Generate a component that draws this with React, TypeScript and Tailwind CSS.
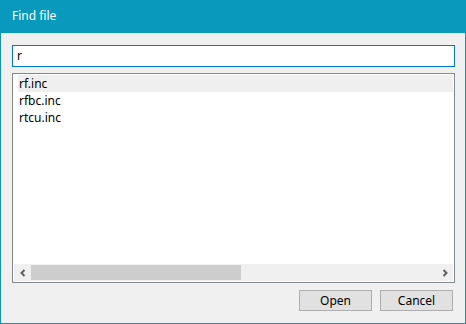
import React from "react";

const font = { fontFamily: '"Segoe UI", "Noto Sans", "Open Sans", sans-serif' };

function Chevron({ dir }: { dir: "left" | "right" }) {
  return (
    <svg width="8" height="8" viewBox="0 0 8 8">
      {dir === "left" ? (
        <polyline points="5.5,1 2.5,4 5.5,7" fill="none" stroke="#606060" strokeWidth="2" />
      ) : (
        <polyline points="2.5,1 5.5,4 2.5,7" fill="none" stroke="#606060" strokeWidth="2" />
      )}
    </svg>
  );
}

export default function App() {
  const files = ["rf.inc", "rfbc.inc", "rtcu.inc"];
  return (
    <div
      className="w-[466px] h-[324px] flex flex-col bg-[#f0f0f0] border-x border-b border-[#0899bc] text-[12px] text-black"
      style={font}
    >
      <div className="h-[33px] bg-[#0899bc] text-white flex items-center pl-[11px] pb-[1px] shrink-0 -mx-px">
        <span className="pl-px">Find file</span>
      </div>
      <div className="flex flex-col pl-[11px] pr-[10px] pt-[12px]">
        <div className="h-[22px] border border-[#0078d7] bg-white flex items-center pl-[4px] leading-none">
          r
        </div>
        <div className="mt-[6px] h-[210px] border border-[#828790] bg-white p-px flex flex-col">
          <div className="flex-1 flex flex-col pl-[4px]">
            {files.map((f, i) => (
              <div
                key={f}
                className={`h-[17px] flex items-center pl-[1px] leading-none ${i === 0 ? "bg-[#efefef]" : ""}`}
              >
                {f}
              </div>
            ))}
          </div>
          <div className="h-[17px] bg-[#f0f0f0] flex items-stretch">
            <div className="w-[17px] flex items-center justify-center">
              <Chevron dir="left" />
            </div>
            <div className="w-[210px] my-[1px] bg-[#cdcdcd]" />
            <div className="flex-1" />
            <div className="w-[17px] flex items-center justify-center">
              <Chevron dir="right" />
            </div>
          </div>
        </div>
        <div className="mt-[7px] flex justify-end pr-[2px]">
          <button className="w-[73px] h-[21px] mr-[8px] border border-[#adadad] bg-[#e1e1e1] flex items-center justify-center leading-none shrink-0">
            Open
          </button>
          <button className="w-[73px] h-[21px] border border-[#adadad] bg-[#e1e1e1] flex items-center justify-center leading-none shrink-0">
            Cancel
          </button>
        </div>
      </div>
    </div>
  );
}
